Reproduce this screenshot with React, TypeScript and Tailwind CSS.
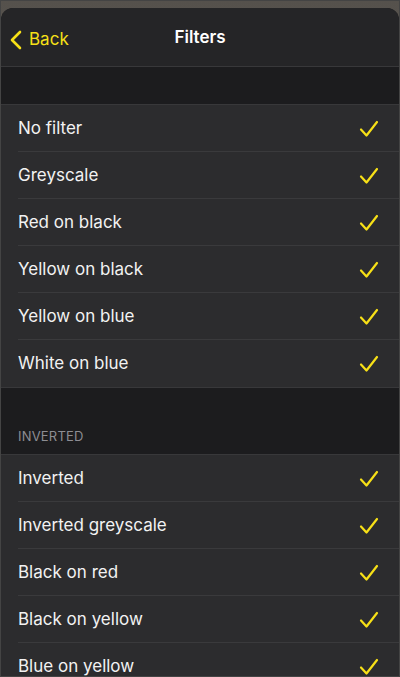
import React from "react";

const Check = () => (
  <svg width="20" height="18" viewBox="0 0 20 18" fill="none">
    <path d="M2 9.5 L7.5 15.5 L18 2" stroke="#f7e017" strokeWidth="2.2" strokeLinecap="round" strokeLinejoin="round" />
  </svg>
);

const Row = ({ label, last }: { label: string; last?: boolean }) => (
  <div className="relative flex h-[47px] items-center justify-between pl-[17px] pr-[20px]">
    <span className="text-[17px] text-[#f2f2f2]">{label}</span>
    <Check />
    {!last && <div className="absolute bottom-0 left-[17px] right-0 h-px bg-[#3a3a3c]" />}
  </div>
);

export default function App() {
  const group1 = ["No filter", "Greyscale", "Red on black", "Yellow on black", "Yellow on blue", "White on blue"];
  const group2 = ["Inverted", "Inverted greyscale", "Black on red", "Black on yellow", "Blue on yellow"];
  return (
    <div
      className="h-[677px] w-[400px] overflow-hidden border border-[#444] bg-gradient-to-b from-[#55514c] to-[#8c8882]"
      style={{ fontFamily: "Inter, 'Noto Sans', 'Liberation Sans', sans-serif" }}
    >
      <div className="mt-[7px] h-[700px] overflow-hidden rounded-t-[12px] bg-[#1c1c1e]">
        <div className="relative flex h-[59px] items-center justify-center border-b border-[#38383a] bg-[#252527]">
          <div className="absolute left-[8px] top-[19px] flex items-center gap-[6px]">
            <svg width="14" height="22" viewBox="0 0 14 22" fill="none">
              <path d="M11 3 L3 11 L11 19" stroke="#f7e017" strokeWidth="2.6" strokeLinecap="round" strokeLinejoin="round" />
            </svg>
            <span className="text-[17px] text-[#f7e017]">Back</span>
          </div>
          <span className="pt-[2px] text-[17px] font-semibold text-white">Filters</span>
        </div>
        <div className="h-[37px]" />
        <div className="border-y border-[#38383a] bg-[#2c2c2e]">
          {group1.map((l, i) => (
            <Row key={l} label={l} last={i === group1.length - 1} />
          ))}
        </div>
        <div className="flex h-[66px] items-end pb-[8px] pl-[17px]">
          <span className="text-[13px] uppercase tracking-[0.2px] text-[#8d8d93]">Inverted</span>
        </div>
        <div className="border-y border-[#38383a] bg-[#2c2c2e]">
          {group2.map((l, i) => (
            <Row key={l} label={l} last={i === group2.length - 1} />
          ))}
        </div>
      </div>
    </div>
  );
}
